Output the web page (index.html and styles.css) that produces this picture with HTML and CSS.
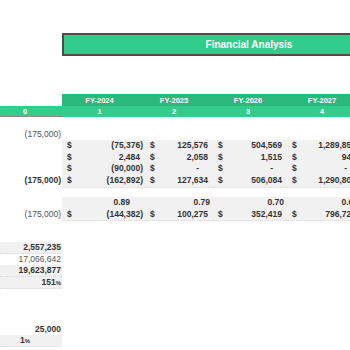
FILE: index.html
```html
<!DOCTYPE html>
<html>
<head>
<meta charset="utf-8">
<link rel="stylesheet" href="styles.css">
</head>
<body>
<div class="sheet">
  <div class="title-row"><div class="title">Financial Analysis</div></div>

  <div class="hdr fy">
    <div class="h0"></div><div>FY-2024</div><div>FY-2025</div><div>FY-2026</div><div>FY-2027</div>
  </div>
  <div class="hdr idx">
    <div class="h0">0</div><div>1</div><div>2</div><div>3</div><div>4</div>
  </div>

  <div class="block-a">
    <div class="row">
      <div class="c0 norm">(175,000)</div>
    </div>
    <div class="row shade">
      <div class="c0"></div>
      <div class="cell"><span>$</span><span class="neg">(75,376)</span></div>
      <div class="cell"><span>$</span><span class="pos">125,576</span></div>
      <div class="cell"><span>$</span><span class="pos">504,569</span></div>
      <div class="cell"><span>$</span><span class="pos">1,289,857</span></div>
    </div>
    <div class="row shade">
      <div class="c0"></div>
      <div class="cell"><span>$</span><span class="pos">2,484</span></div>
      <div class="cell"><span>$</span><span class="pos">2,058</span></div>
      <div class="cell"><span>$</span><span class="pos">1,515</span></div>
      <div class="cell"><span>$</span><span class="pos">947</span></div>
    </div>
    <div class="row shade">
      <div class="c0"></div>
      <div class="cell"><span>$</span><span class="neg">(90,000)</span></div>
      <div class="cell"><span>$</span><span class="dash">-</span></div>
      <div class="cell"><span>$</span><span class="dash">-</span></div>
      <div class="cell"><span>$</span><span class="dash">-</span></div>
    </div>
    <div class="row shade">
      <div class="c0 bold">(175,000)</div>
      <div class="cell"><span>$</span><span class="neg">(162,892)</span></div>
      <div class="cell"><span>$</span><span class="pos">127,634</span></div>
      <div class="cell"><span>$</span><span class="pos">506,084</span></div>
      <div class="cell"><span>$</span><span class="pos">1,290,804</span></div>
    </div>
  </div>

  <div class="block-b">
    <div class="row shade">
      <div class="c0"></div>
      <div class="cell ratio first">0.89</div>
      <div class="cell ratio">0.79</div>
      <div class="cell ratio">0.70</div>
      <div class="cell ratio">0.62</div>
    </div>
    <div class="row shade">
      <div class="c0 norm">(175,000)</div>
      <div class="cell"><span>$</span><span class="neg">(144,382)</span></div>
      <div class="cell"><span>$</span><span class="pos">100,275</span></div>
      <div class="cell"><span>$</span><span class="pos">352,419</span></div>
      <div class="cell"><span>$</span><span class="pos">796,728</span></div>
    </div>
  </div>

  <div class="block-c">
    <div class="solo shade-left bold">2,557,235</div>
    <div class="solo norm">17,066,642</div>
    <div class="solo shade-left bold">19,623,877</div>
    <div class="solo shade-left bold">151<span class="pct">%</span></div>
  </div>

  <div class="block-d">
    <div class="solo bold">25,000</div>
    <div class="solo shade-left bold center">1<span class="pct">%</span></div>
  </div>
</div>
</body>
</html>
```

FILE: styles.css
```css
html, body {
  margin: 0;
  padding: 0;
  background: #ffffff;
  overflow: hidden;
}

body {
  width: 350px;
  height: 350px;
  font-family: "Liberation Sans", Arial, sans-serif;
  color: #333333;
}

.sheet {
  width: 380px;
  padding-top: 33px;
}

.title-row {
  padding-left: 62px;
}

.title {
  width: 374px;
  height: 23px;
  box-sizing: border-box;
  background: #30cd8a;
  border: 2px solid #3f514b;
  color: #ffffff;
  font-weight: bold;
  font-size: 10px;
  display: flex;
  align-items: center;
  justify-content: center;
}

.hdr {
  display: grid;
  grid-template-columns: 62px 75px 74px 74px 74px;
  font-weight: bold;
  font-size: 7.5px;
  color: #ffffff;
  text-align: center;
}

.hdr > div {
  display: flex;
  align-items: center;
  justify-content: center;
}

.fy {
  margin-top: 38px;
  height: 12px;
}

.fy > div {
  background: #2bb87c;
}

.fy > .h0 {
  background: transparent;
}

.idx {
  height: 11px;
  background: #33cc8a;
}

.idx > .h0 {
  padding-right: 12px;
  border-bottom: 1px solid #8a8a8a;
  height: 11px;
  box-sizing: border-box;
}

.block-a {
  margin-top: 11px;
}

.row {
  display: grid;
  grid-template-columns: 62px 83px 68px 74px 74px;
  height: 11.67px;
  font-size: 8.5px;
  font-weight: bold;
  line-height: 11.67px;
}

.block-a .row:first-child {
  height: 12px;
  line-height: 12px;
}

.row.shade > .cell {
  background: #f1f1f1;
  border-bottom: 1px dotted #dcdcdc;
  box-sizing: border-box;
}

.c0 {
  text-align: right;
  padding-right: 1px;
}

.norm {
  font-weight: normal;
  color: #555555;
}

.bold {
  font-weight: bold;
}

.cell {
  display: flex;
  justify-content: space-between;
  padding-left: 5px;
  white-space: nowrap;
}

.pos {
  padding-right: 5px;
}

.neg {
  padding-right: 2px;
}

.dash {
  padding-right: 14px;
}

.ratio {
  justify-content: flex-end;
  padding-right: 3px;
}

.ratio.first {
  padding-right: 15px;
}

.block-b {
  margin-top: 10.3px;
}

.block-c {
  margin-top: 21.6px;
  width: 62px;
}

.solo {
  height: 11.7px;
  line-height: 11.7px;
  font-size: 8.5px;
  text-align: right;
  padding-right: 1px;
}

.shade-left {
  background: #f1f1f1;
  border-bottom: 1px dotted #dcdcdc;
  box-sizing: border-box;
}

.pct {
  font-size: 6px;
}

.center {
  text-align: center;
  padding-right: 12px;
}

.block-d {
  margin-top: 35px;
  width: 62px;
}
```
